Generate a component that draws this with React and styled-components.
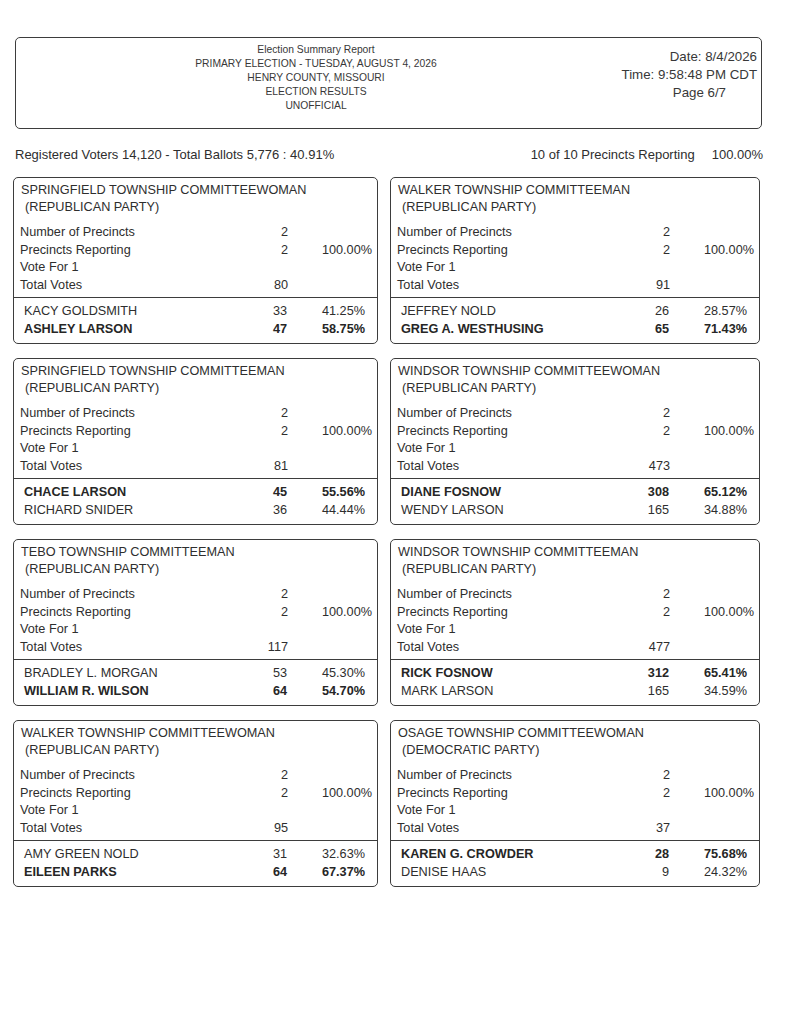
import React from "react";
import styled, { createGlobalStyle } from "styled-components";

const contests = [
  {
    title: "SPRINGFIELD TOWNSHIP COMMITTEEWOMAN",
    party: "(REPUBLICAN PARTY)",
    total: "80",
    candidates: [
      { name: "KACY GOLDSMITH", votes: "33", pct: "41.25%" },
      { name: "ASHLEY LARSON", votes: "47", pct: "58.75%", win: true },
    ],
  },
  {
    title: "WALKER TOWNSHIP COMMITTEEMAN",
    party: "(REPUBLICAN PARTY)",
    total: "91",
    candidates: [
      { name: "JEFFREY NOLD", votes: "26", pct: "28.57%" },
      { name: "GREG A. WESTHUSING", votes: "65", pct: "71.43%", win: true },
    ],
  },
  {
    title: "SPRINGFIELD TOWNSHIP COMMITTEEMAN",
    party: "(REPUBLICAN PARTY)",
    total: "81",
    candidates: [
      { name: "CHACE LARSON", votes: "45", pct: "55.56%", win: true },
      { name: "RICHARD SNIDER", votes: "36", pct: "44.44%" },
    ],
  },
  {
    title: "WINDSOR TOWNSHIP COMMITTEEWOMAN",
    party: "(REPUBLICAN PARTY)",
    total: "473",
    candidates: [
      { name: "DIANE FOSNOW", votes: "308", pct: "65.12%", win: true },
      { name: "WENDY LARSON", votes: "165", pct: "34.88%" },
    ],
  },
  {
    title: "TEBO TOWNSHIP COMMITTEEMAN",
    party: "(REPUBLICAN PARTY)",
    total: "117",
    candidates: [
      { name: "BRADLEY L. MORGAN", votes: "53", pct: "45.30%" },
      { name: "WILLIAM R. WILSON", votes: "64", pct: "54.70%", win: true },
    ],
  },
  {
    title: "WINDSOR TOWNSHIP COMMITTEEMAN",
    party: "(REPUBLICAN PARTY)",
    total: "477",
    candidates: [
      { name: "RICK FOSNOW", votes: "312", pct: "65.41%", win: true },
      { name: "MARK LARSON", votes: "165", pct: "34.59%" },
    ],
  },
  {
    title: "WALKER TOWNSHIP COMMITTEEWOMAN",
    party: "(REPUBLICAN PARTY)",
    total: "95",
    candidates: [
      { name: "AMY GREEN NOLD", votes: "31", pct: "32.63%" },
      { name: "EILEEN PARKS", votes: "64", pct: "67.37%", win: true },
    ],
  },
  {
    title: "OSAGE TOWNSHIP COMMITTEEWOMAN",
    party: "(DEMOCRATIC PARTY)",
    total: "37",
    candidates: [
      { name: "KAREN G. CROWDER", votes: "28", pct: "75.68%", win: true },
      { name: "DENISE HAAS", votes: "9", pct: "24.32%" },
    ],
  },
];

const ContestBox = ({ contest }) => (
  <Box>
    <Title>
      <div>{contest.title}</div>
      <Party>{contest.party}</Party>
    </Title>
    <Stats>
      <StatRow>
        <span>Number of Precincts</span>
        <Num>2</Num>
        <Num />
      </StatRow>
      <StatRow>
        <span>Precincts Reporting</span>
        <Num>2</Num>
        <Num>100.00%</Num>
      </StatRow>
      <StatRow>
        <span>Vote For 1</span>
        <Num />
        <Num />
      </StatRow>
      <StatRow>
        <span>Total Votes</span>
        <Num>{contest.total}</Num>
        <Num />
      </StatRow>
    </Stats>
    <Candidates>
      {contest.candidates.map((c) => (
        <CandRow key={c.name} $win={c.win}>
          <span>{c.name}</span>
          <Num>{c.votes}</Num>
          <Num>{c.pct}</Num>
        </CandRow>
      ))}
    </Candidates>
  </Box>
);

const App = () => {
  return (
    <>
      <GlobalStyle />
      <Page>
        <Header>
          <HeaderCenter>
            <div>Election Summary Report</div>
            <div>PRIMARY ELECTION - TUESDAY, AUGUST 4, 2026</div>
            <div>HENRY COUNTY, MISSOURI</div>
            <div>ELECTION RESULTS</div>
            <div>UNOFFICIAL</div>
          </HeaderCenter>
          <HeaderRight>
            <div>Date: 8/4/2026</div>
            <div>Time: 9:58:48 PM CDT</div>
            <PageNo>Page 6/7</PageNo>
          </HeaderRight>
        </Header>
        <Summary>
          <span>Registered Voters 14,120 - Total Ballots 5,776 : 40.91%</span>
          <Reporting>
            <span>10 of 10 Precincts Reporting</span>
            <span>100.00%</span>
          </Reporting>
        </Summary>
        <Grid>
          {contests.map((c) => (
            <ContestBox key={c.title} contest={c} />
          ))}
        </Grid>
      </Page>
    </>
  );
};

export default App;

const GlobalStyle = createGlobalStyle`
  body {
    margin: 0;
    background: #ffffff;
    font-family: "Liberation Sans", Arial, sans-serif;
    color: #2e2e2e;
  }
`;

const Page = styled.div`
  width: 791px;
  height: 1024px;
  padding-top: 37px;
  box-sizing: border-box;
`;

const Header = styled.div`
  margin-left: 15px;
  width: 747px;
  height: 92px;
  box-sizing: border-box;
  border: 1.5px solid #3d3d3d;
  border-radius: 5px;
  display: flex;
`;

const HeaderCenter = styled.div`
  width: 600px;
  padding-top: 5px;
  text-align: center;
  font-size: 10.3px;
  line-height: 14px;
  color: #383838;
`;

const HeaderRight = styled.div`
  flex: 1;
  padding: 10px 4px 0 0;
  text-align: right;
  font-size: 13.3px;
  line-height: 18px;
  color: #383838;
`;

const PageNo = styled.div`
  padding-right: 31px;
`;

const Summary = styled.div`
  margin: 18px 0 0 15px;
  width: 748px;
  display: flex;
  justify-content: space-between;
  font-size: 13px;
  line-height: 16px;
`;

const Reporting = styled.div`
  display: flex;
  gap: 17px;
`;

const Grid = styled.div`
  margin: 14px 0 0 13px;
  display: grid;
  grid-template-columns: 365px 370px;
  column-gap: 12px;
  row-gap: 14px;
`;

const Box = styled.div`
  height: 167px;
  box-sizing: border-box;
  border: 1.5px solid #3d3d3d;
  border-radius: 5px;
  display: flex;
  flex-direction: column;
  font-size: 12.7px;
`;

const Title = styled.div`
  padding: 4px 7px 0;
  line-height: 17px;
`;

const Party = styled.div`
  padding-left: 4px;
`;

const Stats = styled.div`
  margin-top: 8px;
  padding: 0 5px 3px 6px;
`;

const StatRow = styled.div`
  display: grid;
  grid-template-columns: 1fr 60px 84px;
  line-height: 17.5px;
`;

const Num = styled.span`
  text-align: right;
`;

const Candidates = styled.div`
  flex: 1;
  border-top: 1.5px solid #3d3d3d;
  padding: 5px 12px 0 10px;
`;

const CandRow = styled.div`
  display: grid;
  grid-template-columns: 1fr 60px 78px;
  line-height: 17.5px;
  font-weight: ${({ $win }) => ($win ? 700 : 400)};
  color: ${({ $win }) => ($win ? "#262626" : "#2e2e2e")};
`;
